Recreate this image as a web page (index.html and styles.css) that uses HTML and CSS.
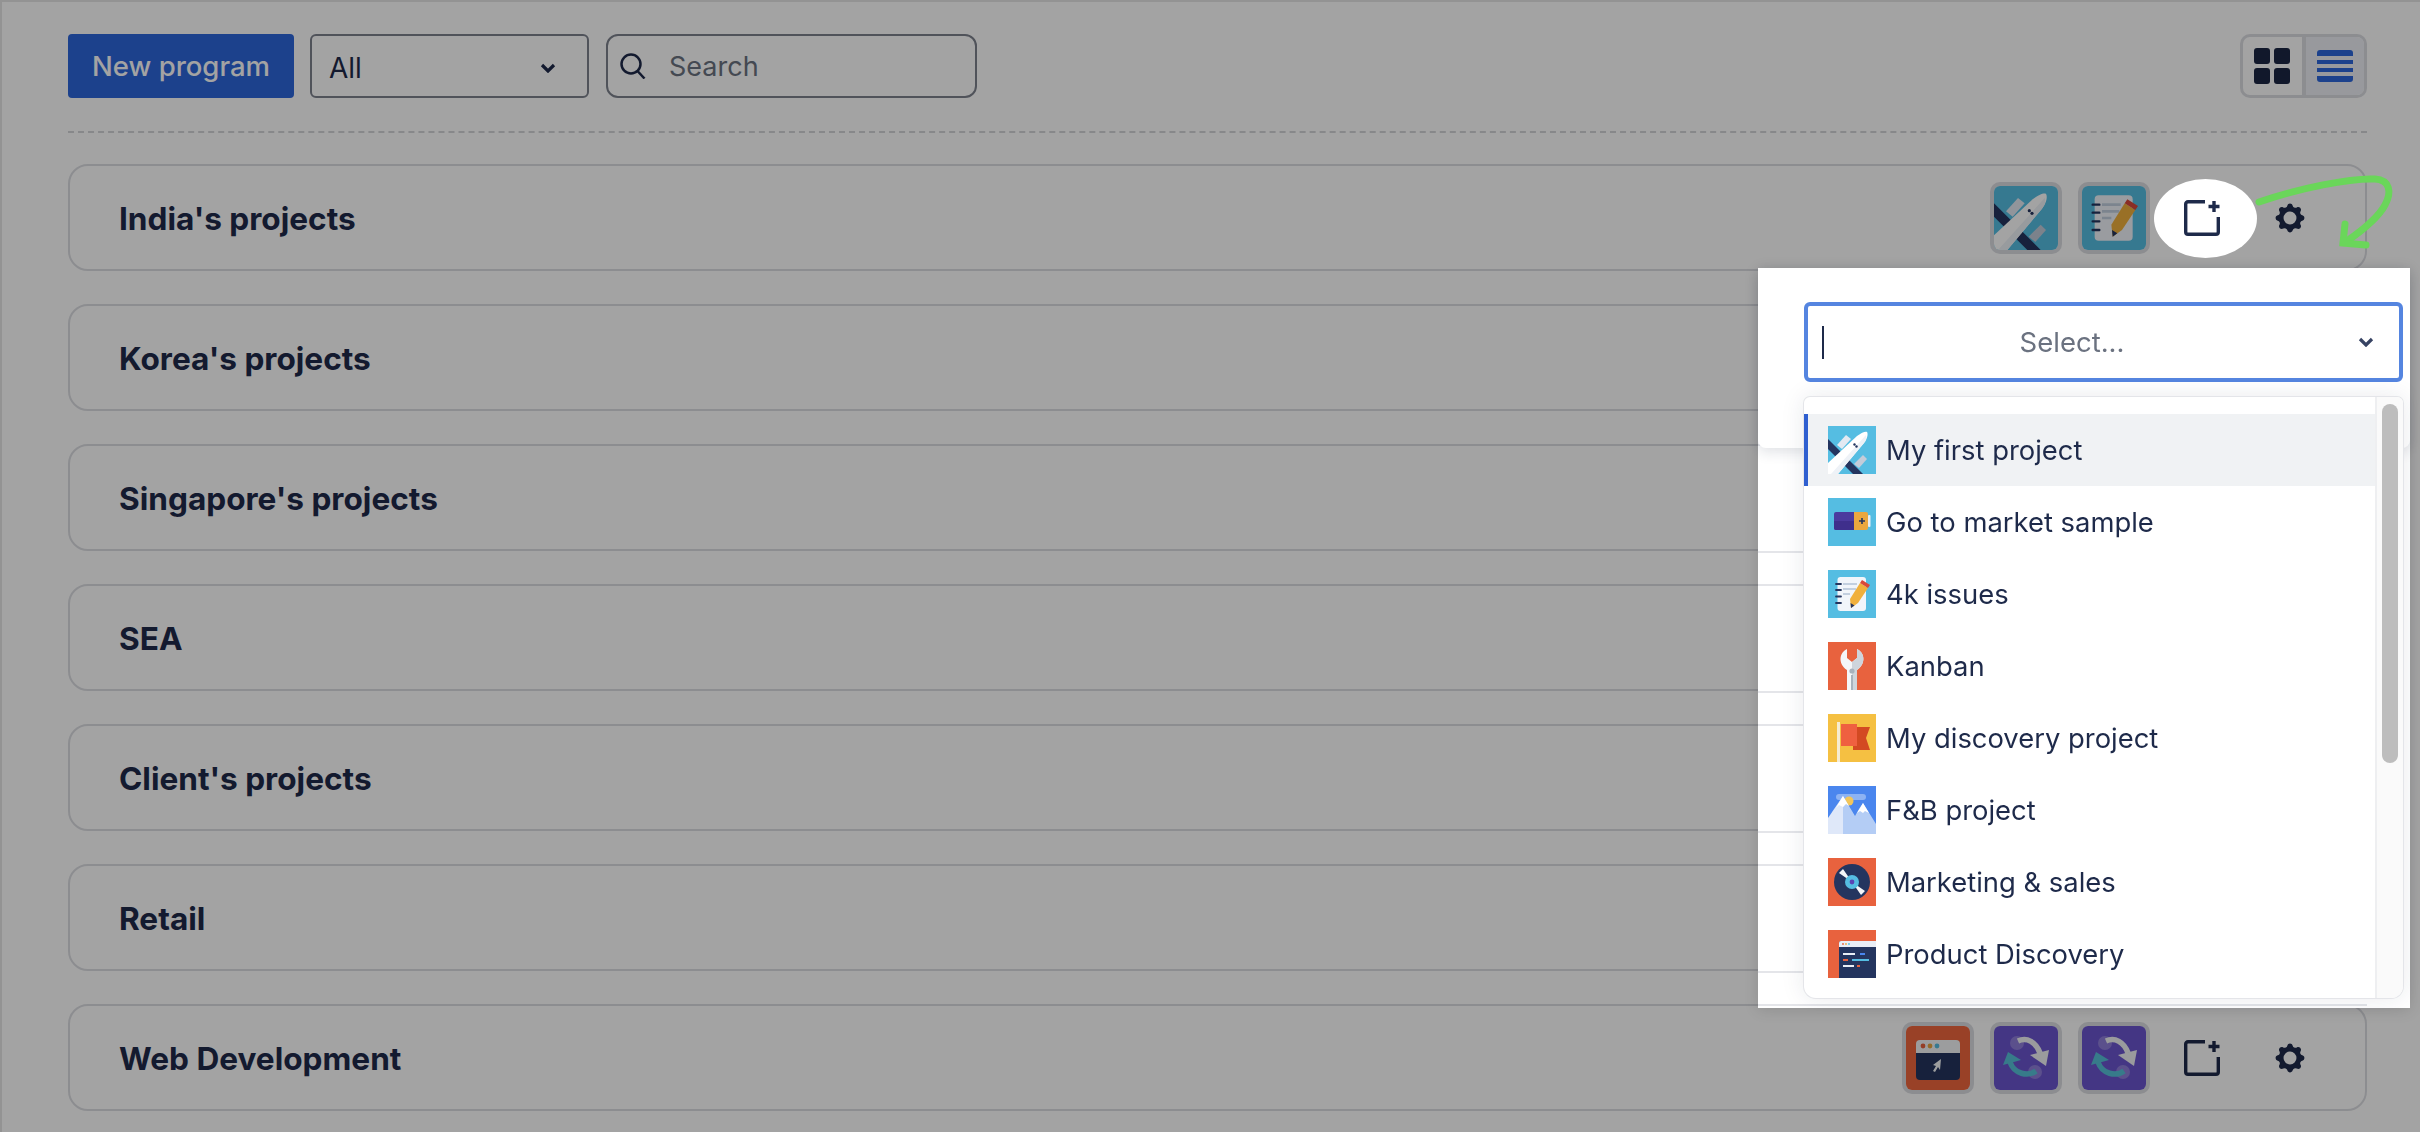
FILE: index.html
```html
<!DOCTYPE html>
<html lang="en">
<head>
<meta charset="utf-8">
<title>Programs</title>
<link rel="stylesheet" href="styles.css">
</head>
<body>
<svg class="defs" width="0" height="0" aria-hidden="true">
  <symbol id="i-plane" viewBox="0 0 48 48">
    <rect width="48" height="48" fill="#55bde2"/>
    <path d="M0 13 35 48H25L0 23Z" fill="#24355f"/>
    <path d="M9 19 18 9l5 4-9 10Z" fill="#e3e9f2"/>
    <path d="M26 38 35 29l4 4-8 9Z" fill="#c3ccd9"/>
    <path d="M0 48V37L29 10c5-4 9-5 10-4s1 6-3 11L10 48Z" fill="#fff"/>
    <path d="M3 48 38 9c1 3 0 5-2 8L10 48Z" fill="#eef2f7"/>
    <circle cx="26.500" cy="18.500" r="1.200" fill="#24355f"/>
    <circle cx="28.500" cy="20.500" r="1.200" fill="#24355f"/>
  </symbol>
  <symbol id="i-battery" viewBox="0 0 48 48">
    <rect width="48" height="48" fill="#55bde2"/>
    <rect x="40" y="17" width="2.500" height="12" rx="1" fill="#e6edf5"/>
    <path d="M8 14H27V32H8a2 2 0 0 1-2-2V16a2 2 0 0 1 2-2Z" fill="#4b3a9e"/>
    <path d="M6 23H27V32H8a2 2 0 0 1-2-2Z" fill="#3f2f8c"/>
    <path d="M26 14H38a2 2 0 0 1 2 2V30a2 2 0 0 1-2 2H26Z" fill="#eba73f"/>
    <path d="M31 23h6M34 20v6" stroke="#24355f" stroke-width="1.600"/>
  </symbol>
  <symbol id="i-notes" viewBox="0 0 48 48">
    <rect width="48" height="48" fill="#55bde2"/>
    <rect x="9.500" y="7" width="28.500" height="34" rx="3" fill="#f1f5fa"/>
    <path d="M8 14h5M8 20h5M8 26.500h5M8 33h5" stroke="#24355f" stroke-width="1.800" stroke-linecap="round"/>
    <path d="M15 14h14M15 19h13M15 24h7" stroke="#c2cfdf" stroke-width="2"/>
    <path d="M23 38 22 29 32 13 40 18 30 33Z" fill="#f0b03c"/>
    <path d="M32 13 34 10 42 15 40 18Z" fill="#d8483a"/>
    <path d="M23 38 22.500 33 26.500 35.500Z" fill="#24355f"/>
  </symbol>
  <symbol id="i-wrench" viewBox="0 0 48 48">
    <rect width="48" height="48" fill="#e8623e"/>
    <path d="M19 7C12 10 9 21 19 28V48H29V28C39 21 36 10 29 7V16L24 20 19 16Z" fill="#f4f6f8"/>
    <path d="M24 20 29 16V7C36 10 39 21 29 28V48H24Z" fill="#ced5dc"/>
    <circle cx="24" cy="29" r="2.600" fill="#a8b2bd"/>
    <rect x="23" y="33" width="2" height="15" fill="#a8b2bd"/>
  </symbol>
  <symbol id="i-flag" viewBox="0 0 48 48">
    <rect width="48" height="48" fill="#f5c042"/>
    <rect x="9" y="8" width="3" height="40" fill="#f6ecd0"/>
    <path d="M25 13H42L38 24 42 36H25Z" fill="#d34a22"/>
    <path d="M13 10H29V32H13Z" fill="#ef6040"/>
  </symbol>
  <symbol id="i-peaks" viewBox="0 0 48 48">
    <rect width="48" height="48" fill="#4a86ee"/>
    <rect x="8" y="8" width="30" height="6" rx="3" fill="#8db3f3"/>
    <circle cx="21" cy="15" r="4.500" fill="#f3c65a"/>
    <path d="M0 32 15 10 15 48H0Z" fill="#dfe8f9"/>
    <path d="M15 10 27 30 31 23 35 17 48 38V48H15Z" fill="#b4cdf5"/>
    <path d="M15 10 21 20 18 18 15 21 11 19 8 22Z" fill="#fff"/>
    <path d="M35 17 41 27 37 25 35 27 32 25 29 27Z" fill="#fff"/>
  </symbol>
  <symbol id="i-disc" viewBox="0 0 48 48">
    <rect width="48" height="48" fill="#e8623e"/>
    <circle cx="24" cy="24" r="18" fill="#24355f"/>
    <path d="M11 15 15 11 24 24 37 33 33 37 24 24Z" fill="#f4f6f8"/>
    <circle cx="24" cy="24" r="7" fill="#55bde2"/>
    <circle cx="24" cy="24" r="2.400" fill="#5a44b5"/>
  </symbol>
  <symbol id="i-code" viewBox="0 0 48 48">
    <rect width="48" height="48" fill="#e8623e"/>
    <path d="M11 13a2 2 0 0 1 2-2H48V48H11Z" fill="#24355f"/>
    <path d="M11 13a2 2 0 0 1 2-2H48V17H11Z" fill="#e9eef6"/>
    <circle cx="15" cy="14" r=".9" fill="#e8623e"/><circle cx="18" cy="14" r=".9" fill="#eba73f"/><circle cx="21" cy="14" r=".9" fill="#55bde2"/>
    <path d="M15 24H27" stroke="#e9eef6" stroke-width="1.800"/>
    <path d="M32 24H37" stroke="#4a86ee" stroke-width="1.800"/>
    <path d="M15 30H20" stroke="#e8623e" stroke-width="1.800"/>
    <path d="M24 30H41" stroke="#55bde2" stroke-width="1.800"/>
    <path d="M15 36H26" stroke="#e9eef6" stroke-width="1.800"/>
    <path d="M29 36H32" stroke="#e8623e" stroke-width="1.800"/>
  </symbol>
  <symbol id="i-browser" viewBox="0 0 64 64">
    <rect width="64" height="64" fill="#f0673e"/>
    <path d="M14 14H50a4 4 0 0 1 4 4V27H10V18a4 4 0 0 1 4-4Z" fill="#f4f6f8"/>
    <path d="M10 27H54V50a4 4 0 0 1-4 4H14a4 4 0 0 1-4-4Z" fill="#24355f"/>
    <circle cx="17" cy="20" r="2.400" fill="#e8623e"/><circle cx="24" cy="20" r="2.400" fill="#eba73f"/><circle cx="31" cy="20" r="2.400" fill="#55bde2"/>
    <path d="M35 33 34 44 32 41 29 46 27 45 30 40 27 39Z" fill="#f4f6f8"/>
  </symbol>
  <symbol id="i-sync" viewBox="0 0 64 64">
    <rect width="64" height="64" fill="#6b55cf"/>
    <circle cx="23" cy="17" r="7" fill="#8f7edb"/>
    <circle cx="41" cy="46" r="7" fill="#8f7edb"/>
    <path d="M24 15C33 11 42 16 46 27" fill="none" stroke="#f1f3f6" stroke-width="5.500"/>
    <path d="M36 29 55 24 52 40Z" fill="#f1f3f6"/>
    <path d="M42 45C34 51 20 48 16 36" fill="none" stroke="#57c0d8" stroke-width="5.500"/>
    <path d="M9 39 14 26 27 34Z" fill="#57c0d8"/>
  </symbol>
  <symbol id="i-new" viewBox="0 0 36 36">
    <path d="M21 1.700H4A2.300 2.300 0 0 0 1.700 4V32A2.300 2.300 0 0 0 4 34.300H32A2.300 2.300 0 0 0 34.300 32V17" fill="none" stroke="currentColor" stroke-width="3.400"/>
    <path d="M30 1V12M24.500 6.500H35.500" fill="none" stroke="currentColor" stroke-width="3.400"/>
  </symbol>
  <symbol id="i-gear" viewBox="0 0 20 20">
    <path fill="currentColor" fill-rule="evenodd" d="M11.490 3.170c-.38-1.560-2.600-1.560-2.980 0a1.532 1.532 0 01-2.286.948c-1.372-.836-2.942.734-2.106 2.106.54.886.061 2.042-.947 2.287-1.561.379-1.561 2.600 0 2.978a1.532 1.532 0 01.947 2.287c-.836 1.372.734 2.942 2.106 2.106a1.532 1.532 0 012.287.947c.379 1.561 2.600 1.561 2.978 0a1.533 1.533 0 012.287-.947c1.372.836 2.942-.734 2.106-2.106a1.533 1.533 0 01.947-2.287c1.561-.379 1.561-2.600 0-2.978a1.532 1.532 0 01-.947-2.287c.836-1.372-.734-2.942-2.106-2.106a1.532 1.532 0 01-2.287-.947zM10 13.600a3.600 3.600 0 100-7.200 3.600 3.600 0 000 7.200z"/>
  </symbol>
  <symbol id="i-chev" viewBox="0 0 16 10">
    <path d="M2 2 8 8 14 2" fill="none" stroke="currentColor" stroke-width="3.200"/>
  </symbol>
</svg>

<div class="page">
  <header class="toolbar">
    <button class="btn-new">New program</button>
    <div class="filter"><span>All</span><svg class="chev-sm"><use href="#i-chev"/></svg></div>
    <div class="search">
      <svg class="search-ico" viewBox="0 0 26 26"><circle cx="11" cy="11" r="9.500" fill="none" stroke="currentColor" stroke-width="2.500"/><path d="M17.500 18 24.500 25.500" fill="none" stroke="currentColor" stroke-width="2.500"/></svg>
      <span>Search</span>
    </div>
    <div class="toggle">
      <div class="toggle-cell">
        <div class="grid-ico"><i></i><i></i><i></i><i></i></div>
      </div>
      <div class="toggle-cell toggle-on">
        <div class="list-ico"><i></i><i></i><i></i><i></i></div>
      </div>
    </div>
  </header>

  <main class="cards">
    <section class="card">
      <h2>India's projects</h2>
      <div class="actions">
        <div class="proj"><svg><use href="#i-plane"/></svg></div>
        <div class="proj"><svg><use href="#i-notes"/></svg></div>
        <div class="act act-spot"><svg class="ico-new"><use href="#i-new"/></svg></div>
        <div class="act"><svg class="ico-gear"><use href="#i-gear"/></svg></div>
      </div>
    </section>
    <section class="card"><h2>Korea's projects</h2></section>
    <section class="card"><h2>Singapore's projects</h2></section>
    <section class="card"><h2>SEA</h2></section>
    <section class="card"><h2>Client's projects</h2></section>
    <section class="card"><h2>Retail</h2></section>
    <section class="card">
      <h2>Web Development</h2>
      <div class="actions">
        <div class="proj"><svg><use href="#i-browser"/></svg></div>
        <div class="proj"><svg><use href="#i-sync"/></svg></div>
        <div class="proj"><svg><use href="#i-sync"/></svg></div>
        <div class="act"><svg class="ico-new"><use href="#i-new"/></svg></div>
        <div class="act"><svg class="ico-gear"><use href="#i-gear"/></svg></div>
      </div>
    </section>
  </main>
</div>

<div class="dim"></div>

<svg class="arrow" viewBox="0 0 150 85">
  <path d="M9 32C50 18 100 8 125 9 140 10 142 22 135 35 128 48 110 62 97 71" fill="none" stroke="#6ad65a" stroke-width="7" stroke-linecap="round"/>
  <path d="M95 54 93 73 116 75" fill="none" stroke="#6ad65a" stroke-width="7" stroke-linecap="round"/>
</svg>

<aside class="panel">
  <div class="popup">
    <div class="select">
      <span class="caret"></span>
      <span class="placeholder">Select...</span>
      <svg class="chev-lg"><use href="#i-chev"/></svg>
    </div>
  </div>
  <div class="menu">
    <ul class="options">
      <li class="option option-active"><svg><use href="#i-plane"/></svg><span>My first project</span></li>
      <li class="option"><svg><use href="#i-battery"/></svg><span>Go to market sample</span></li>
      <li class="option"><svg><use href="#i-notes"/></svg><span>4k issues</span></li>
      <li class="option"><svg><use href="#i-wrench"/></svg><span>Kanban</span></li>
      <li class="option"><svg><use href="#i-flag"/></svg><span>My discovery project</span></li>
      <li class="option"><svg><use href="#i-peaks"/></svg><span>F&amp;B project</span></li>
      <li class="option"><svg><use href="#i-disc"/></svg><span>Marketing &amp; sales</span></li>
      <li class="option"><svg><use href="#i-code"/></svg><span>Product Discovery</span></li>
    </ul>
    <div class="track"><div class="thumb"></div></div>
  </div>
</aside>
</body>
</html>
```
FILE: styles.css
```css
* { box-sizing: border-box; }
html, body { margin: 0; padding: 0; }
body {
  width: 2420px;
  height: 1132px;
  overflow: hidden;
  background: #fff;
  font-family: Inter, "Liberation Sans", sans-serif;
  color: #1e2a4a;
}
.defs { position: absolute; }
.page {
  height: 1132px;
  padding: 32px 53px 0 66px;
  border-top: 2px solid #e6e6e6;
  border-left: 2px solid #e6e6e6;
}
.toolbar {
  display: flex;
  align-items: stretch;
  height: 99px;
  padding-bottom: 33px;
  border-bottom: 2px dashed #d4d5d8;
}
.btn-new {
  width: 226px;
  border: 0;
  border-radius: 4px;
  background: #2c66dc;
  color: #fff;
  font: 500 27.500px Inter, sans-serif;
}
.filter {
  width: 279px;
  margin-left: 16px;
  display: flex;
  align-items: center;
  justify-content: space-between;
  padding: 4px 31px 0 17px;
  border: 2px solid #7d828e;
  border-radius: 6px;
  font-size: 28px;
}
.chev-sm { width: 16px; height: 10px; color: #1e2a4a; }
.search {
  width: 371px;
  margin-left: 17px;
  display: flex;
  align-items: center;
  gap: 23px;
  padding-left: 12px;
  border: 2px solid #7d828e;
  border-radius: 12px;
  font-size: 27px;
  color: #6b7280;
}
.search-ico { width: 26px; height: 26px; color: #1e2a4a; }
.toggle {
  margin-left: auto;
  width: 127px;
  display: flex;
  border: 3px solid #dcdde2;
  border-radius: 10px;
  overflow: hidden;
}
.toggle-cell {
  flex: 1;
  display: flex;
  align-items: center;
  justify-content: center;
}
.toggle-on {
  background: #eef0f6;
  border-left: 4px solid #dcdde2;
}
.grid-ico {
  display: grid;
  grid-template-columns: 16px 16px;
  grid-auto-rows: 16px;
  gap: 4px;
}
.grid-ico i { background: #1b2744; border-radius: 3px; }
.list-ico { width: 36px; display: flex; flex-direction: column; gap: 4px; }
.list-ico i { height: 4px; background: #2c66dc; }
.list-ico i:first-child { height: 6px; border-radius: 3px 3px 0 0; }
.list-ico i:last-child { height: 6px; border-radius: 0 0 3px 3px; }

.cards {
  display: flex;
  flex-direction: column;
  gap: 33px;
  padding-top: 31px;
}
.card {
  height: 107px;
  display: flex;
  align-items: center;
  justify-content: space-between;
  padding: 0 39px 0 49px;
  border: 2px solid #dcdde2;
  border-radius: 20px;
}
.card h2 {
  margin: 0;
  padding-top: 2px;
  font-size: 31.600px;
  font-weight: 700;
  color: #1e2a4a;
}
.actions { display: flex; gap: 16px; }
.proj {
  width: 72px;
  height: 72px;
  border: 4px solid #dcdde2;
  border-radius: 10px;
  overflow: hidden;
}
.proj svg { display: block; width: 64px; height: 64px; }
.act {
  width: 72px;
  height: 72px;
  display: flex;
  align-items: center;
  justify-content: center;
  color: #1e2a4a;
}
.act-spot { position: relative; z-index: 20; }
.act-spot::before {
  content: "";
  position: absolute;
  left: -12px;
  top: -3px;
  width: 103px;
  height: 79px;
  border-radius: 50%;
  background: #fff;
}
.ico-new { position: relative; width: 36px; height: 36px; }
.ico-gear { width: 36px; height: 36px; }

.dim {
  position: fixed;
  inset: 0;
  z-index: 10;
  background: rgba(0, 0, 0, .36);
}
.arrow {
  position: absolute;
  left: 2250px;
  top: 170px;
  z-index: 30;
  width: 150px;
  height: 85px;
}
.panel {
  position: absolute;
  left: 1758px;
  top: 268px;
  z-index: 20;
  width: 652px;
  height: 740px;
  background-color: #fff;
  background-image: repeating-linear-gradient(180deg, transparent 0 3px, #e4e5e9 3px 5px, transparent 5px 36px, #e4e5e9 36px 38px, transparent 38px 140px);
  background-size: 609px 100%;
  background-repeat: no-repeat;
  box-shadow: 0 2px 14px rgba(0, 0, 0, .12);
}
.popup {
  height: 180px;
  padding: 34px 7px 0 46px;
  background: #fff;
  border-radius: 0 0 8px 8px;
  box-shadow: 0 4px 14px rgba(30, 40, 70, .14);
}
.select {
  height: 80px;
  display: flex;
  align-items: center;
  padding-left: 14px;
  border: 4px solid #5585e0;
  border-radius: 6px;
}
.caret { width: 2px; height: 33px; background: #1e2a4a; }
.placeholder {
  flex: 1;
  text-align: center;
  font-size: 27.500px;
  color: #6b7280;
}
.chev-lg { width: 16px; height: 10px; margin: 0 25px 0 38px; color: #374363; }
.menu {
  position: absolute;
  left: 46px;
  top: 129px;
  width: 599px;
  height: 601px;
  display: flex;
  background: #fff;
  border-radius: 6px 6px 12px 12px;
  box-shadow: 0 0 0 1px #e4e5e9, 0 0 24px rgba(30, 40, 70, .10);
  overflow: hidden;
}
.options {
  flex: 1;
  margin: 0;
  padding: 17px 0 0;
  list-style: none;
  border-right: 2px solid #eeeff1;
}
.option {
  height: 72px;
  display: flex;
  align-items: center;
  gap: 10px;
  padding-left: 24px;
  font-size: 27.400px;
  color: #1e2a4a;
}
.option svg { width: 48px; height: 48px; flex: none; }
.option-active { background: #f0f2f4; box-shadow: inset 4px 0 #2f5fd0; }
.track {
  width: 26px;
  padding: 7px 5px 0 5px;
  background: #fafafa;
}
.thumb { width: 16px; height: 359px; border-radius: 8px; background: #bdbdbd; }
```
